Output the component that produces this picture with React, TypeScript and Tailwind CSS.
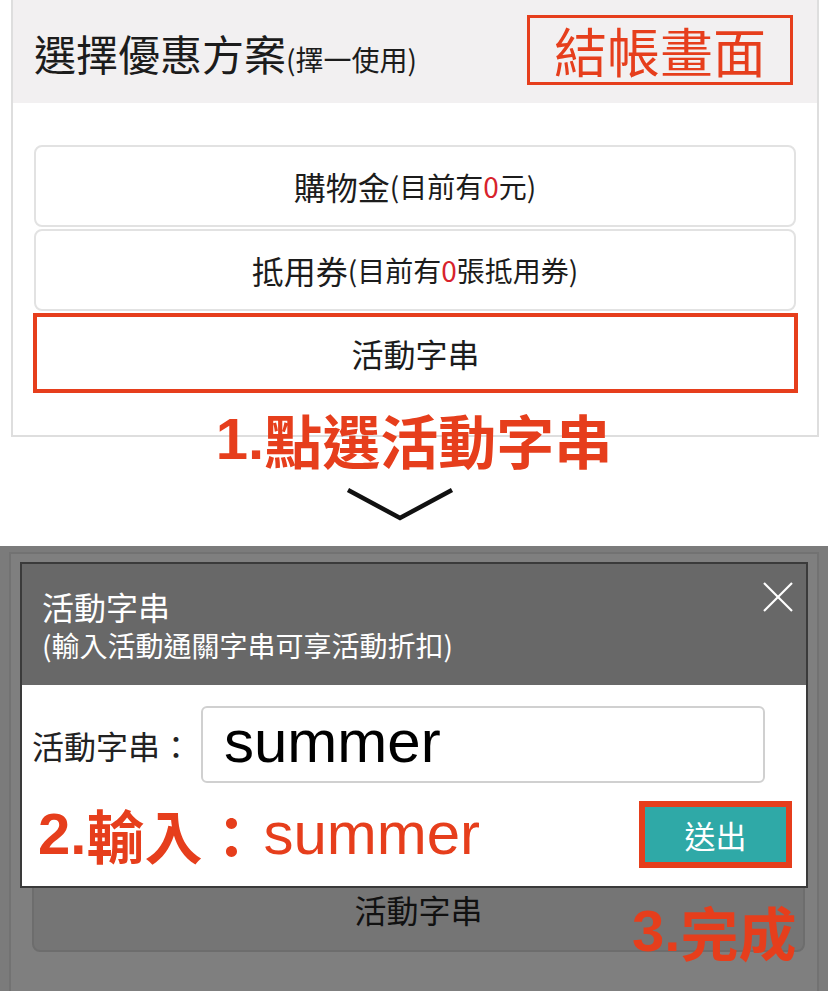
import React from "react";

export default function App() {
  return (
    <div className="w-[828px] h-[991px] overflow-hidden bg-white font-['Noto_Sans_CJK_TC',sans-serif] text-[#1c1c1c]">
      {/* top: checkout screen */}
      <div className="h-[546px] flex flex-col">
        <div className="ml-[11px] w-[808px] border-x-2 border-b-2 border-[#dedede]">
          <div className="h-[103px] bg-[#f2f0f1] flex items-center justify-between pl-[21px] pr-[24px]">
            <div className="flex items-baseline pt-[2px]">
              <span className="text-[42px] leading-none">選擇優惠方案</span>
              <span className="text-[28px] leading-none">(擇一使用)</span>
            </div>
            <div className="w-[266px] h-[70px] -mt-[3px] border-[3px] border-[#e63e1c] flex items-center justify-center">
              <span className="text-[53px] leading-none text-[#e63e1c]">結帳畫面</span>
            </div>
          </div>
          <div className="pt-[42px] pb-[42px] px-[21px] flex flex-col">
            <div className="h-[82px] rounded-[8px] border-2 border-[#e2e2e2] flex items-center justify-center">
              <span className="text-[32px] leading-none">購物金</span>
              <span className="text-[28px] leading-none">
                (目前有<span className="text-[#d8232c]">0</span>元)
              </span>
            </div>
            <div className="mt-[2px] h-[82px] rounded-[8px] border-2 border-[#e2e2e2] flex items-center justify-center">
              <span className="text-[32px] leading-none">抵用券</span>
              <span className="text-[28px] leading-none">
                (目前有<span className="text-[#d8232c]">0</span>張抵用券)
              </span>
            </div>
            <div className="mt-[2px] -ml-[1px] w-[765px] h-[80px] border-[4px] border-[#e63e1c] flex items-center justify-center">
              <span className="text-[32px] leading-none">活動字串</span>
            </div>
          </div>
        </div>
        <div className="-mt-[33px] h-[70px] flex items-center justify-center text-[58px] leading-none font-bold text-[#e63e1c]">
          <span className="font-['Liberation_Sans',sans-serif]">1.</span>
          <span>點選活動字串</span>
        </div>
        <div className="mt-[12px] flex justify-center">
          <svg width="110" height="36" viewBox="0 0 110 36" className="ml-[-28px]">
            <polyline points="3,4 55,32 107,4" fill="none" stroke="#111" strokeWidth="4.5" />
          </svg>
        </div>
      </div>

      {/* bottom: dialog */}
      <div className="relative h-[445px] bg-[#7b7b7b] pt-[6px]">
        <div className="ml-[9px] w-[810px] h-[439px] border-x-2 border-t-2 border-[#727272] bg-[#7f7f7f] pt-[8px] px-[9px]">
          <div className="relative z-10 w-[788px] border-2 border-[#3a3a3a] flex flex-col">
            <div className="h-[121px] bg-[#686868] flex justify-between pl-[20px] pr-[12px] pt-[21px]">
              <div className="flex flex-col text-white">
                <span className="text-[32px] leading-[42px]">活動字串</span>
                <span className="text-[28px] leading-[36px]">(輸入活動通關字串可享活動折扣)</span>
              </div>
              <svg width="32" height="32" viewBox="0 0 32 32" className="-mt-[4px]">
                <line x1="2" y1="2" x2="30" y2="30" stroke="#fff" strokeWidth="2.2" />
                <line x1="30" y1="2" x2="2" y2="30" stroke="#fff" strokeWidth="2.2" />
              </svg>
            </div>
            <div className="h-[201px] bg-white flex flex-col pt-[21px]">
              <div className="flex items-center pl-[10px]">
                <span className="w-[169px] text-[32px] leading-none text-[#222]">活動字串：</span>
                <div className="w-[564px] h-[77px] rounded-[6px] border-2 border-[#d0d0d0] flex items-center pl-[21px]">
                  <span className="font-['Liberation_Sans',sans-serif] text-[60px] leading-none text-black -mt-[6px]">summer</span>
                </div>
              </div>
              <div className="mt-[18px] flex items-center justify-between pl-[16px] pr-[14px]">
                <div className="flex items-center leading-none text-[#e63e1c] -mt-[2px]">
                  <span className="font-['Liberation_Sans',sans-serif] text-[58px] font-bold">2.</span>
                  <span className="text-[58px] font-bold">輸入：</span>
                  <span className="font-['Liberation_Sans',sans-serif] text-[60px] ml-[3px]">summer</span>
                </div>
                <div className="w-[153px] h-[67px] border-[6px] border-[#e63e1c] bg-[#2fa9a7] flex items-center justify-center">
                  <span className="text-[31px] leading-none text-white">送出</span>
                </div>
              </div>
            </div>
          </div>
          <div className="-mt-[18px] ml-[12px] w-[773px] h-[82px] rounded-[8px] border-2 border-[#6d6d6d] bg-[#757575] flex items-center justify-center">
            <span className="text-[32px] leading-none text-[#111] -mt-[4px]">活動字串</span>
          </div>
        </div>
        <div className="absolute left-[632px] top-[356px] flex items-center leading-none text-[#e63e1c] font-bold text-[58px]">
          <span className="font-['Liberation_Sans',sans-serif]">3.</span>
          <span>完成</span>
        </div>
      </div>
    </div>
  );
}
